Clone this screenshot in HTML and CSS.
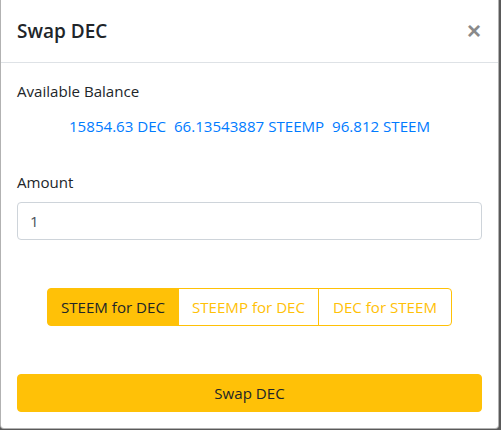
FILE: index.html
```html
<!DOCTYPE html>
<html lang="en">
<head>
<meta charset="utf-8">
<title>Swap DEC</title>
<link rel="stylesheet" href="styles.css">
</head>
<body>
<div class="backdrop">
  <div class="modal">
    <div class="modal-header">
      <h5 class="modal-title">Swap DEC</h5>
      <button class="close" type="button" aria-label="Close">×</button>
    </div>
    <div class="modal-body">
      <label class="label">Available Balance</label>
      <div class="balance">15854.63 DEC&nbsp;&nbsp;66.13543887 STEEMP&nbsp;&nbsp;96.812 STEEM</div>
      <label class="label" for="amount">Amount</label>
      <input class="form-control" id="amount" type="text" value="1">
      <div class="btn-group">
        <button class="btn btn-warning" type="button">STEEM for DEC</button>
        <button class="btn btn-outline" type="button">STEEMP for DEC</button>
        <button class="btn btn-outline" type="button">DEC for STEEM</button>
      </div>
      <button class="btn btn-warning btn-block" type="button">Swap DEC</button>
    </div>
  </div>
</div>
</body>
</html>
```

FILE: styles.css
```css
* { box-sizing: border-box; }
html, body { margin: 0; padding: 0; }
body {
  width: 501px;
  height: 430px;
  background: #5a5a5a;
  font-family: "Open Sans", "Noto Sans", sans-serif;
  font-size: 15.1px;
  line-height: 24px;
  color: #212529;
  overflow: hidden;
}
.backdrop {
  display: flex;
  align-items: flex-start;
}
.modal {
  width: 499px;
  height: 429px;
  background: #fff;
  border: 1px solid rgba(0,0,0,.3);
  border-top: 0;
  border-radius: 0 0 4px 4px;
  display: flex;
  flex-direction: column;
}
.modal-header {
  display: flex;
  align-items: center;
  justify-content: space-between;
  height: 63px;
  padding: 0 16px;
  border-bottom: 1px solid #dee2e6;
}
.modal-title {
  margin: 0;
  font-size: 19px;
  font-weight: 600;
  line-height: 30px;
  color: #212529;
}
.close {
  border: 0;
  background: transparent;
  padding: 0;
  margin-right: 1px;
  font-family: "Liberation Sans", Arial, sans-serif;
  font-size: 24px;
  font-weight: 700;
  line-height: 1;
  color: #8a8a8a;
  cursor: pointer;
}
.modal-body {
  padding: 16px;
  display: flex;
  flex-direction: column;
}
.label {
  display: block;
  margin: 0 0 8px;
}
.balance {
  text-align: center;
  color: #007bff;
  margin: 3px 0 32px;
}
.form-control {
  display: block;
  width: 100%;
  height: 38px;
  padding: 6px 12px;
  font: inherit;
  color: #495057;
  background: #fff;
  border: 1px solid #ced4da;
  border-radius: 4px;
  margin: 0 0 48px;
}
.btn-group {
  display: flex;
  justify-content: center;
  margin: 0 0 48px;
}
.btn {
  font: inherit;
  height: 38px;
  padding: 6px 12px;
  border: 1px solid #ffc107;
  background: #fff;
  cursor: pointer;
}
.btn-group .btn { border-radius: 0; padding: 6px 13px; }
.btn-group .btn:first-child { border-radius: 4px 0 0 4px; }
.btn-group .btn:last-child { border-radius: 0 4px 4px 0; padding: 6px 14px; }
.btn-group .btn + .btn { margin-left: -1px; }
.btn-warning {
  background: #ffc107;
  color: #212529;
}
.btn-outline {
  color: #ffc107;
}
.btn-block {
  width: 100%;
  border-radius: 4px;
}
```
